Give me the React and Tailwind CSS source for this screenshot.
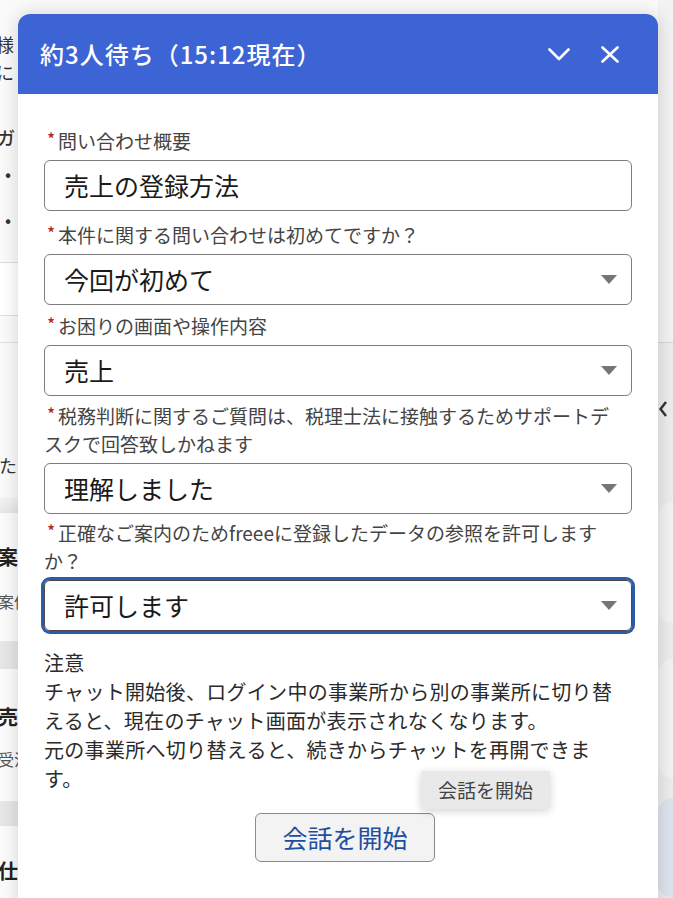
import React from "react";

function Label({ lines }) {
  return (
    <div className="text-[19px] leading-[28px] text-[#444] whitespace-nowrap">
      {lines.map((l, i) => (
        <div key={i}>
          {i === 0 && (
            <span className="relative -top-[4px] inline-block w-[14px] text-center text-[16px] leading-[16px] font-medium text-[#b8231f]">*</span>
          )}
          {l}
        </div>
      ))}
    </div>
  );
}

function Tri() {
  return (
    <svg width="16" height="9" viewBox="0 0 16 9" className="shrink-0">
      <path d="M0 0 L16 0 L8 9 Z" fill="#767676" />
    </svg>
  );
}

function Box({ value, select, focused }) {
  return (
    <div
      className={
        "flex h-[51px] items-center justify-between rounded-[6px] border pl-[19px] pr-[14px] text-[25px] text-[#1a1a1a] " +
        (focused ? "border-[#4a4a4a] ring-[3px] ring-[#2c5ba8]" : "border-[#7d7d7d]")
      }
    >
      <span className="leading-none">{value}</span>
      {select && <Tri />}
    </div>
  );
}

export default function App() {
  return (
    <div className="relative h-[898px] w-[673px] overflow-hidden bg-[#f0f0f0] font-['Noto_Sans_CJK_JP','Noto_Sans',sans-serif]">
      {/* background page */}
      <div className="flex h-full">
        <div className="flex w-[658px] flex-col bg-[#fafafa]">
          <div className="pt-[30px] text-[18px] leading-[28px] text-[#333] whitespace-nowrap">
            <div className="-ml-[22px]">皆様　　のお知らせ</div>
            <div className="-ml-[4px]">に　　案内いたします</div>
            <div className="mt-[37px] -ml-[3px] font-medium">ガ　　ド</div>
            <div className="mt-[8px] pl-[5px]">•</div>
            <div className="mt-[18px] pl-[5px]">•</div>
          </div>
          <div className="mt-[29px] ml-[-10px] h-[54px] w-[300px] rounded-[12px] border border-[#dcdcdc] bg-white" />
          <div className="mt-[26px] border-t border-[#dedede]" />
          <div className="mt-[108px] text-[18px] leading-[28px] text-[#333] whitespace-nowrap">
            <div className="-ml-[1px]">たい</div>
          </div>
          <div className="mt-[18px] h-[16px] bg-gradient-to-b from-[#f4f4f4] to-[#e6e6e6]" />
          <div className="h-[128px] bg-[#fbfbfb] pt-[30px] whitespace-nowrap">
            <div className="-ml-[2px] text-[20px] font-bold leading-[28px] text-[#222]">案件</div>
            <div className="mt-[18px] -ml-[2px] text-[16px] leading-[24px] text-[#555]">案件</div>
          </div>
          <div className="h-[28px] bg-[#e6e6e6]" />
          <div className="h-[132px] bg-[#fbfbfb] pt-[34px] whitespace-nowrap">
            <div className="-ml-[2px] text-[20px] font-bold leading-[28px] text-[#222]">売上</div>
            <div className="mt-[16px] -ml-[2px] text-[16px] leading-[24px] text-[#555]">受注</div>
          </div>
          <div className="h-[25px] bg-[#e6e6e6]" />
          <div className="flex-1 bg-[#fbfbfb] pt-[31px] whitespace-nowrap">
            <div className="-ml-[2px] text-[20px] font-bold leading-[28px] text-[#222]">仕入</div>
          </div>
        </div>
        <div className="flex flex-1 flex-col bg-[#ececec]">
          <div className="h-[343px] bg-[#f2f2f2]" />
          <div className="border-t border-[#d6d6d6]" />
          <div className="mt-[58px] pl-[1px] text-[#333]">
            <svg width="8" height="16" viewBox="0 0 8 16">
              <path d="M7 1 L1.5 8 L7 15" stroke="#333" strokeWidth="2.5" fill="none" />
            </svg>
          </div>
          <div className="mt-[85px] h-[122px] rounded-l-[16px] bg-[#f2f2f2]" />
          <div className="mt-[36px] h-[120px] rounded-l-[16px] bg-[#f2f2f2]" />
          <div className="mt-[20px] h-[100px] rounded-l-[50px] bg-[#dde3ee]" />
        </div>
      </div>

      {/* chat panel */}
      <div className="absolute left-[18px] top-[14px] flex h-[900px] w-[640px] flex-col rounded-t-[12px] bg-white shadow-[0_0_18px_rgba(0,0,0,0.16)]">
        <div className="flex h-[80px] shrink-0 items-center justify-between rounded-t-[12px] bg-[#3d64d4] pl-[22px] pr-[39px]">
          <div className="text-[24px] font-medium tracking-[1px] text-white">約3人待ち（15:12現在）</div>
          <div className="flex items-center gap-[31px]">
            <svg width="22" height="13" viewBox="0 0 22 13">
              <path d="M1.5 1.5 L11 11 L20.5 1.5" stroke="white" strokeWidth="2.6" fill="none" strokeLinecap="round" strokeLinejoin="round" />
            </svg>
            <svg width="18" height="17" viewBox="0 0 18 17">
              <path d="M1.5 1.5 L16.5 15.5 M16.5 1.5 L1.5 15.5" stroke="white" strokeWidth="2.6" fill="none" strokeLinecap="round" />
            </svg>
          </div>
        </div>

        <div className="px-[26px] pt-[33px]">
          <Label lines={["問い合わせ概要"]} />
          <div className="mt-[5px]">
            <Box value="売上の登録方法" />
          </div>

          <div className="mt-[10px]">
            <Label lines={["本件に関する問い合わせは初めてですか？"]} />
          </div>
          <div className="mt-[5px]">
            <Box value="今回が初めて" select />
          </div>

          <div className="mt-[7px]">
            <Label lines={["お困りの画面や操作内容"]} />
          </div>
          <div className="mt-[5px]">
            <Box value="売上" select />
          </div>

          <div className="mt-[6px]">
            <Label lines={["税務判断に関するご質問は、税理士法に接触するためサポートデ", "スクで回答致しかねます"]} />
          </div>
          <div className="mt-[5px]">
            <Box value="理解しました" select />
          </div>

          <div className="mt-[5px]">
            <Label lines={["正確なご案内のためfreeeに登録したデータの参照を許可します", "か？"]} />
          </div>
          <div className="mt-[5px]">
            <Box value="許可します" select focused />
          </div>

          <div className="mt-[17px] text-[20px] leading-[29px] tracking-[0.3px] text-[#2b2b2b] whitespace-nowrap">
            <div>注意</div>
            <div>チャット開始後、ログイン中の事業所から別の事業所に切り替</div>
            <div>えると、現在のチャット画面が表示されなくなります。</div>
            <div>元の事業所へ切り替えると、続きからチャットを再開できま</div>
            <div>す。</div>
          </div>

          <div className="relative mt-[20px] ml-[211px] w-[180px]">
            <button className="flex h-[49px] w-[180px] items-center justify-center rounded-[6px] border border-[#8a8a8a] bg-[#f3f3f3] text-[25px] text-[#1d4f9e]">
              会話を開始
            </button>
            <div className="absolute left-[166px] top-[-42px] flex h-[38px] w-[129px] items-center justify-center rounded-[2px] bg-[#e9e9e9] text-[19px] text-[#444] shadow-[0_2px_8px_rgba(0,0,0,0.18)] whitespace-nowrap">
              会話を開始
            </div>
          </div>
        </div>
      </div>
    </div>
  );
}
